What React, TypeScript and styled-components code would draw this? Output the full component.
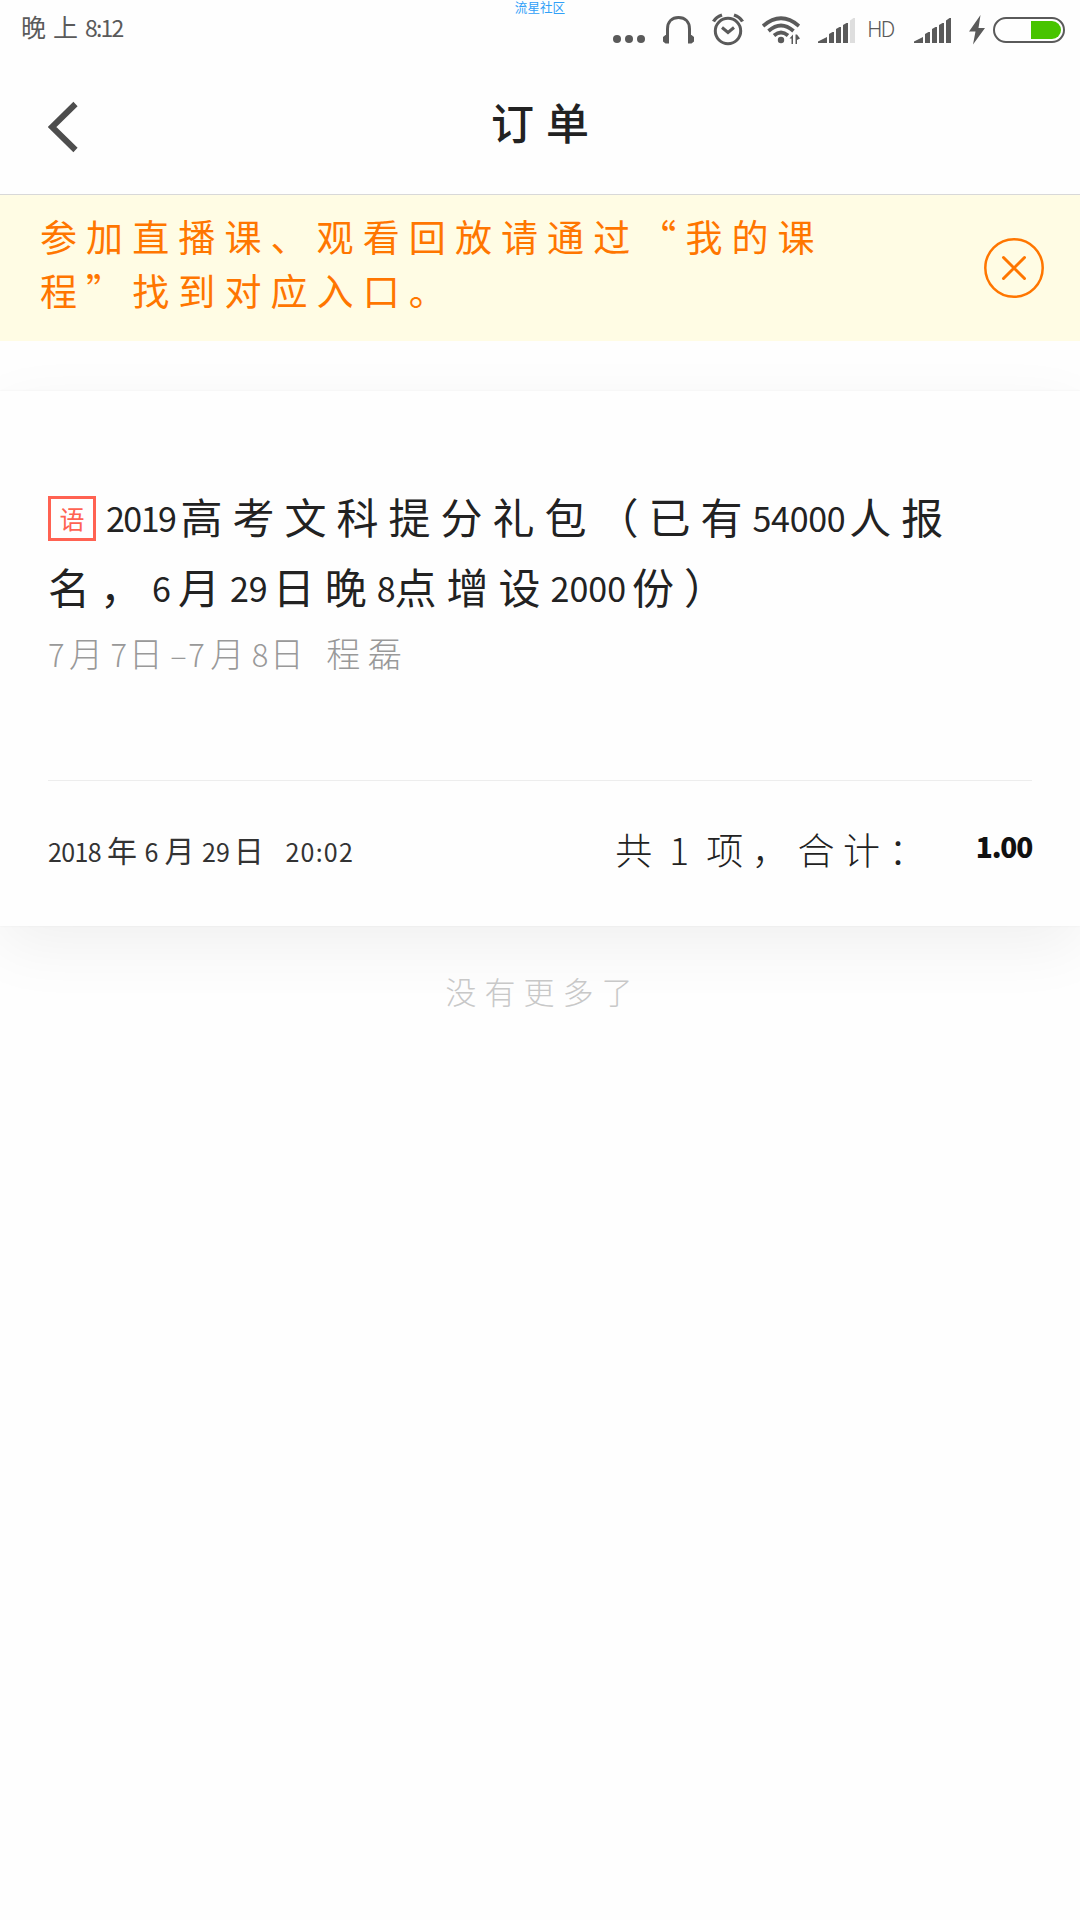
import React from "react";
import styled, { createGlobalStyle } from "styled-components";

const Global = createGlobalStyle`
  * { box-sizing: border-box; }
  body {
    margin: 0;
    background: #fefefe;
    font-family: "Noto Sans CJK SC", "Noto Sans", sans-serif;
    font-weight: 300;
    text-spacing-trim: space-all;
  }
`;

const Page = styled.div`
  width: 1080px;
  height: 1920px;
  display: flex;
  flex-direction: column;
  overflow: hidden;
  background: #fefefe;
`;

const Top = styled.header`
  height: 195px;
  background: #fefefe;
  border-bottom: 1px solid #d8d8d8;
  position: relative;
`;

const Watermark = styled.span`
  position: absolute;
  top: 0;
  left: 0;
  width: 100%;
  text-align: center;
  font-size: 12.6px;
  line-height: 13px;
  font-weight: 400;
  color: #30a0f8;
`;

const StatusBar = styled.div`
  height: 60px;
  padding: 0 15px 0 21px;
  display: flex;
  justify-content: space-between;
  color: #5a5a5a;
`;

const Clock = styled.div`
  font-size: 25px;
  line-height: 52px;
  letter-spacing: 7px;
  font-weight: 400;
`;

const StatusIcons = styled.div`
  display: flex;
  align-items: flex-start;
  gap: 18px;
  svg { display: block; flex: none; }
`;

const Network = styled.span`
  width: 30px;
  margin: 0 -1px 0 -6px;
  font-size: 22px;
  line-height: 54px;
  letter-spacing: -2px;
`;

const BatteryBox = styled.span`
  margin-left: -10px;
`;

const NavBar = styled.nav`
  height: 134px;
  padding: 0 48px;
  display: grid;
  grid-template-columns: 60px 1fr 60px;
  align-items: center;
`;

const BackButton = styled.button`
  border: 0;
  padding: 0;
  background: none;
  width: 32px;
  height: 52px;
  svg { display: block; }
`;

const PageTitle = styled.h1`
  margin: 0 0 12px;
  text-align: center;
  font-size: 43px;
  line-height: 60px;
  font-weight: 500;
  letter-spacing: 12px;
  text-indent: 12px;
  color: #222;
`;

const Notice = styled.section`
  height: 146px;
  padding: 14px 35px 0 40px;
  display: flex;
  justify-content: space-between;
  background: #fffce4;
  color: #ff7600;
`;

const NoticeText = styled.p`
  margin: 0;
  width: 795px;
  font-size: 37px;
  line-height: 54px;
  letter-spacing: 9.1px;
  font-weight: 400;
`;

const CloseButton = styled.button`
  border: 0;
  padding: 0;
  margin-top: 28px;
  width: 62px;
  height: 62px;
  background: none;
  svg { display: block; }
`;

const OrderList = styled.main`
  flex: 1;
  padding-top: 50px;
  overflow: hidden;
`;

const Card = styled.article`
  height: 535px;
  padding: 90px 48px 0;
  display: flex;
  flex-direction: column;
  background: #fefefe;
  box-shadow: 0 20px 60px rgba(0, 0, 0, 0.06), 0 0 2px rgba(0, 0, 0, 0.06);
`;

const Num = styled.span<{ $size: number; $gap?: number; $lift?: number; $pad?: number }>`
  font-size: ${(p) => p.$size}px;
  letter-spacing: ${(p) => p.$gap ?? 0}px;
  vertical-align: ${(p) => p.$lift ?? 0}px;
  margin-right: ${(p) => p.$pad ?? 0}px;
  line-height: 1;
`;

const CourseTitle = styled.h2`
  margin: 0;
  max-width: 930px;
  font-size: 42px;
  font-weight: 400;
  line-height: 70px;
  letter-spacing: 10px;
  color: #222;
`;

const Subject = styled.span`
  display: inline-flex;
  align-items: center;
  justify-content: center;
  width: 48px;
  height: 45px;
  margin-right: 10px;
  vertical-align: 5px;
  border: 3px solid #ff6252;
  color: #ff6252;
  font-size: 25px;
  line-height: 30px;
  letter-spacing: 0;
`;

const CourseMeta = styled.p`
  margin: 7px 0 0;
  font-size: 34px;
  line-height: 50px;
  letter-spacing: 7.5px;
  color: #999;
`;

const Summary = styled.footer`
  margin-top: auto;
  height: 146px;
  border-top: 1px solid #ededed;
  padding-bottom: 10px;
  display: flex;
  align-items: center;
  justify-content: space-between;
  color: #222;
`;

const OrderDate = styled.time`
  font-size: 30px;
  letter-spacing: 7.5px;
  font-weight: 400;
  color: #333;
`;

const Total = styled.div`
  display: flex;
  align-items: center;
  font-size: 37px;
`;

const TotalCell = styled.span`
  width: 45.6px;
  text-align: center;
`;

const Amount = styled.strong`
  width: 102px;
  padding-bottom: 6px;
  text-align: right;
  font-size: 28px;
  font-weight: 900;
  letter-spacing: -1.2px;
  color: #111;
`;

const EndHint = styled.p`
  margin: 43px 0 0;
  text-align: center;
  font-size: 31px;
  line-height: 44px;
  letter-spacing: 8px;
  text-indent: 6px;
  color: #c8c8c8;
`;

const DotsIcon = () => (
  <svg width="32" height="60" fill="#5a5a5a">
    <circle cx="4" cy="39" r="4" />
    <circle cx="16" cy="39" r="4" />
    <circle cx="28" cy="39" r="4" />
  </svg>
);

const HeadphonesIcon = () => (
  <svg width="31" height="60" fill="none" stroke="#5a5a5a" strokeWidth="3">
    <path d="M4.500 43V29C4.500 21.500 9 17.500 15.500 17.500S26.500 21.500 26.500 29V43" />
    <path d="M6 35H2.500L0 37V41.500L2.500 43.500H6ZM25 35H28.500L31 37V41.500L28.500 43.500H25Z" fill="#5a5a5a" stroke="none" />
  </svg>
);

const AlarmIcon = () => (
  <svg width="32" height="60" fill="none" stroke="#5a5a5a" strokeWidth="3">
    <circle cx="16" cy="31" r="12.700" />
    <path d="M10 27.500L16 32.500L22 27.500" />
    <path d="M1.500 21.500Q4 17 10 15M30.500 21.500Q28 17 22 15" strokeWidth="3.400" />
  </svg>
);

const WifiIcon = () => (
  <svg width="38" height="60" fill="none" stroke="#5a5a5a" strokeWidth="3.700">
    <path d="M1 26Q19 10.500 37 26" />
    <path d="M6.500 31Q19 20 31.500 31" />
    <path d="M12 35.500Q19 29.500 26 35.500" />
    <circle cx="19" cy="40" r="3.200" fill="#5a5a5a" stroke="none" />
    <path d="M27.500 38.500L31 34.500V44H29.500V38.500ZM33.500 34.500V44H35V40L38 38.500L35 34.500Z" fill="#5a5a5a" stroke="none" />
  </svg>
);

const SignalIcon = ({ weak }: { weak?: boolean }) => (
  <svg width="37" height="60" fill="#5a5a5a">
    <path d="M0 43V41.500L9 37V43Z" />
    <path d="M11 43V34L14.500 32H16V43Z" />
    <path d="M18 43V29L21.500 27H23V43Z" />
    <path d="M25 43V25L28.500 23H30V43Z" />
    <path d="M32 43V20.500L35.500 18H37V43Z" fill={weak ? "#dedede" : "#5a5a5a"} />
  </svg>
);

const BoltIcon = () => (
  <svg width="16" height="60" fill="#5a5a5a">
    <path d="M11.500 15L0 31.500H6.500L4 44.500L16 28H9.500Z" />
  </svg>
);

const BatteryIcon = () => (
  <svg width="72" height="60">
    <rect x="1" y="18" width="70" height="24" rx="12" fill="none" stroke="#5a5a5a" strokeWidth="2" />
    <path d="M38 21H59A9 9 0 0 1 59 39H38Z" fill="#48c400" />
  </svg>
);

export default function App() {
  return (
    <Page lang="zh-CN">
      <Global />
      <Top>
        <Watermark>流星社区</Watermark>
        <StatusBar>
          <Clock>
            晚上<Num $size={23} $gap={-1.8}>8:12</Num>
          </Clock>
          <StatusIcons>
            <DotsIcon />
            <HeadphonesIcon />
            <AlarmIcon />
            <WifiIcon />
            <SignalIcon weak />
            <Network>HD</Network>
            <SignalIcon />
            <BoltIcon />
            <BatteryBox>
              <BatteryIcon />
            </BatteryBox>
          </StatusIcons>
        </StatusBar>
        <NavBar>
          <BackButton aria-label="返回">
            <svg width="32" height="52" fill="none" stroke="#4d4d4d" strokeWidth="6">
              <path d="M27.500 3L4 26L27.500 49" />
            </svg>
          </BackButton>
          <PageTitle>订单</PageTitle>
        </NavBar>
      </Top>
      <Notice>
        <NoticeText>参加直播课、观看回放请通过“我的课程”找到对应入口。</NoticeText>
        <CloseButton aria-label="关闭">
          <svg width="62" height="62" fill="none" stroke="#ff7600" strokeLinecap="round">
            <circle cx="31" cy="31" r="28.700" strokeWidth="2.500" />
            <path d="M20.500 20.500L41.500 41.500M41.500 20.500L20.500 41.500" strokeWidth="3" />
          </svg>
        </CloseButton>
      </Notice>
      <OrderList>
        <Card>
          <CourseTitle>
            <Subject>语</Subject>
            <Num $size={34} $gap={-1.5} $lift={2} $pad={5}>2019</Num>
            高考文科提分礼包（已有
            <Num $size={34} $gap={-0.3} $lift={2} $pad={4}>54000</Num>
            人报名，
            <Num $size={34} $gap={0} $lift={2} $pad={7}>6</Num>月
            <Num $size={34} $gap={0} $lift={2} $pad={5}>29</Num>日晚
            <Num $size={34} $gap={-1} $lift={2}>8</Num>点增设
            <Num $size={34} $gap={0} $lift={2} $pad={6}>2000</Num>份）
          </CourseTitle>
          <CourseMeta>
            <Num $size={31} $gap={-0.5} $pad={5}>7</Num>月<Num $size={31} $gap={-0.5} $pad={2}>7</Num>日
            <Num $size={31} $gap={-0.5} $pad={2}>–</Num>
            <Num $size={31} $gap={-0.5} $pad={6}>7</Num>月<Num $size={31} $gap={-0.5} $pad={2}>8</Num>日 程磊
          </CourseMeta>
          <Summary>
            <OrderDate>
              <Num $size={25} $gap={-0.6} $pad={6}>2018</Num>年<Num $size={25} $pad={6}>6</Num>月
              <Num $size={25} $pad={4}>29</Num>日 <Num $size={25} $gap={1.2}>20:02</Num>
            </OrderDate>
            <Total>
              {Array.from("共1项，合计：").map((ch, i) => (
                <TotalCell key={i}>{ch}</TotalCell>
              ))}
              <Amount>1.00</Amount>
            </Total>
          </Summary>
        </Card>
        <EndHint>没有更多了</EndHint>
      </OrderList>
    </Page>
  );
}
